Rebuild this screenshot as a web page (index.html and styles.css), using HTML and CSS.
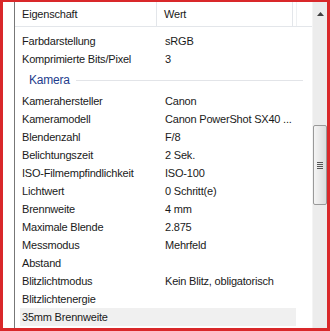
FILE: index.html
```html
<!DOCTYPE html>
<html lang="de">
<head>
<meta charset="UTF-8">
<title>Eigenschaften</title>
<link rel="stylesheet" href="styles.css">
</head>
<body>
<div class="frame">
    <div class="panel">
        <div class="list">
            <div class="header">
                <div class="hcell name">Eigenschaft</div>
                <div class="hcell value">Wert</div>
                <div class="hcell filler"></div>
            </div>
            <div class="rows">
                <div class="row"><span class="name">Farbdarstellung</span><span class="value">sRGB</span></div>
                <div class="row"><span class="name">Komprimierte Bits/Pixel</span><span class="value">3</span></div>
                <div class="group"><span class="group-title">Kamera</span><span class="group-line"></span></div>
                <div class="row"><span class="name">Kamerahersteller</span><span class="value">Canon</span></div>
                <div class="row"><span class="name">Kameramodell</span><span class="value">Canon PowerShot SX40 ...</span></div>
                <div class="row"><span class="name">Blendenzahl</span><span class="value">F/8</span></div>
                <div class="row"><span class="name">Belichtungszeit</span><span class="value">2 Sek.</span></div>
                <div class="row"><span class="name">ISO-Filmempfindlichkeit</span><span class="value">ISO-100</span></div>
                <div class="row"><span class="name">Lichtwert</span><span class="value">0 Schritt(e)</span></div>
                <div class="row"><span class="name">Brennweite</span><span class="value">4 mm</span></div>
                <div class="row"><span class="name">Maximale Blende</span><span class="value">2.875</span></div>
                <div class="row"><span class="name">Messmodus</span><span class="value">Mehrfeld</span></div>
                <div class="row"><span class="name">Abstand</span><span class="value"></span></div>
                <div class="row"><span class="name">Blitzlichtmodus</span><span class="value">Kein Blitz, obligatorisch</span></div>
                <div class="row"><span class="name">Blitzlichtenergie</span><span class="value"></span></div>
                <div class="row hover"><span class="name">35mm Brennweite</span><span class="value"></span></div>
            </div>
        </div>
        <div class="scrollbar">
            <div class="arrow">
                <svg width="7" height="4" viewBox="0 0 7 4"><path d="M0 4 L3.5 0 L7 4 Z" fill="#404040"/></svg>
            </div>
            <div class="thumb">
                <div class="grip"><span></span><span></span><span></span><span></span></div>
            </div>
        </div>
    </div>
</div>
</body>
</html>
```

FILE: styles.css
```css
body {
    margin: 0;
    padding: 0;
    font-family: "Liberation Sans", Arial, sans-serif;
    font-size: 11px;
    letter-spacing: -0.2px;
    color: #1a1a1a;
}

.frame {
    box-sizing: border-box;
    width: 330px;
    height: 331px;
    border: 2px solid #d9282a;
    border-left-width: 3px;
    border-right-width: 3px;
    border-bottom-width: 3px;
    background: #fff;
    padding-left: 11px;
    overflow: hidden;
}

.panel {
    display: flex;
    height: 100%;
    border-left: 1px solid #777;
}

.list {
    flex: 1;
    overflow: hidden;
}

.header {
    display: flex;
    height: 24px;
    border-bottom: 1px solid #e3e6ea;
}

.hcell {
    display: flex;
    align-items: center;
    box-sizing: border-box;
    border-right: 1px solid #e3e6ea;
}

.hcell.name {
    width: 142px;
    padding-left: 7px;
}

.hcell.value {
    width: 136px;
    padding-left: 7px;
}

.hcell.filler {
    flex: 1;
    border-right: none;
    border-left: 1px solid #eef0f2;
    margin-left: 3px;
}

.rows {
    padding: 5px 0 0 5px;
    width: 276px;
}

.row {
    display: flex;
    height: 18px;
    align-items: center;
}

.row .name {
    width: 143px;
    padding-left: 2px;
    white-space: nowrap;
}

.row .value {
    white-space: nowrap;
}

.row.hover {
    background: #f0f0f0;
}

.group {
    display: flex;
    align-items: center;
    height: 24px;
    padding-left: 9px;
}

.group-title {
    color: #1e3c8c;
    margin-right: 6px;
    font-size: 12px;
}

.group-line {
    flex: 1;
    height: 1px;
    background: #e2e4e8;
    margin-right: -7px;
}

.scrollbar {
    width: 14px;
    background: #ececec;
    border-left: 1px solid #f4f4f4;
    position: relative;
}

.arrow {
    display: flex;
    justify-content: center;
    padding-top: 10px;
    height: 14px;
}

.thumb {
    position: absolute;
    left: 0;
    right: 0;
    top: 123px;
    height: 80px;
    box-sizing: border-box;
    border: 1px solid #999;
    border-radius: 2px;
    background: linear-gradient(to right, #f4f4f4, #dcdcdc);
    display: flex;
    align-items: center;
    justify-content: center;
}

.grip {
    display: flex;
    flex-direction: column;
    gap: 1px;
}

.grip span {
    display: block;
    width: 6px;
    height: 1px;
    background: #555;
}
```
